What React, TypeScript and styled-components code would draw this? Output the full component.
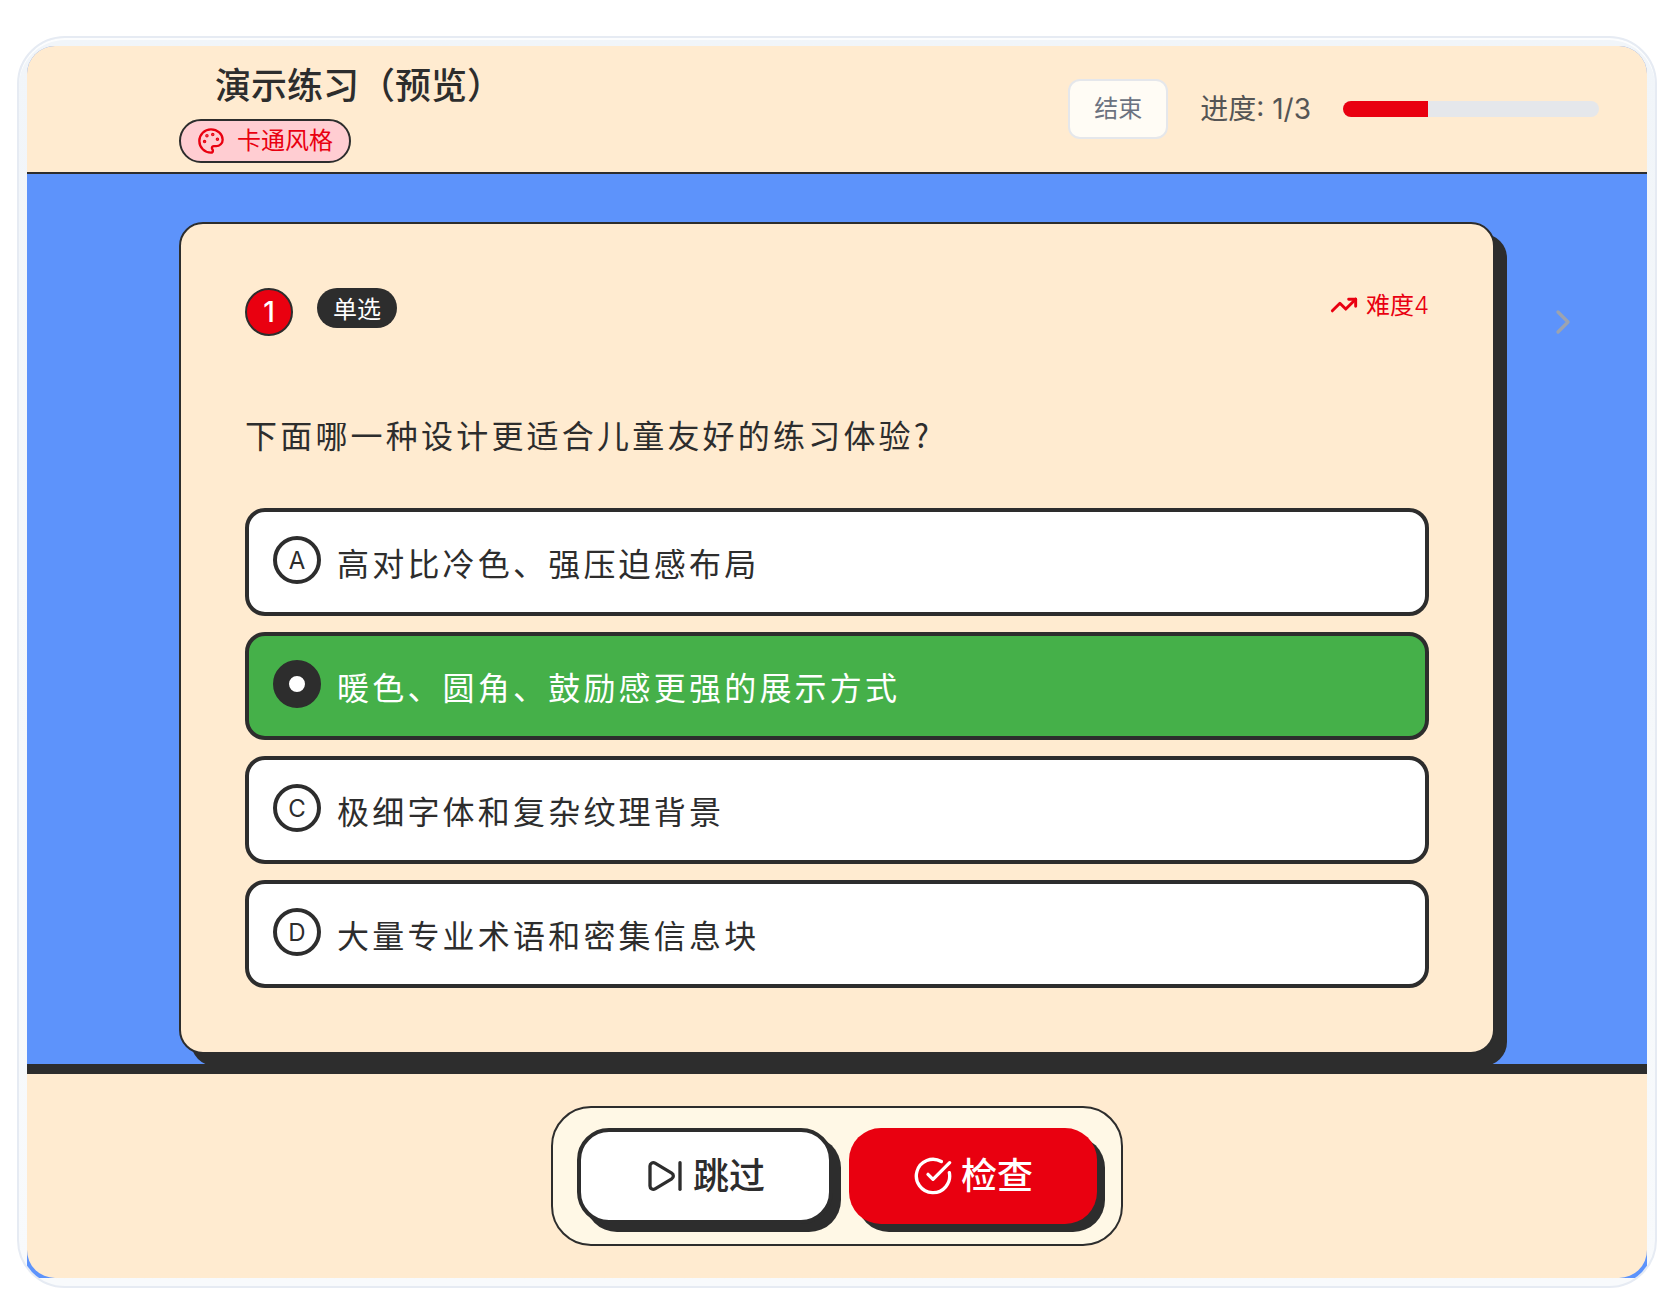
import React, { useState } from "react";
import styled, { createGlobalStyle } from "styled-components";
import { ChevronRight, CircleCheckBig, TrendingUp } from "lucide-react";

const ink = "#2d2d2d";
const cream = "#ffebd0";
const red = "#e90010";
const textFont = '"Noto Sans CJK SC", sans-serif';
const uiFont = 'Inter, "Noto Sans CJK SC", sans-serif';

const GlobalStyle = createGlobalStyle`
  *, *::before, *::after { box-sizing: border-box; }
  body {
    margin: 0;
    background: #ffffff;
    color: ${ink};
    font-family: ${textFont};
  }
  button { font-family: ${uiFont}; cursor: pointer; }
  h1 { margin: 0; }
`;

const Page = styled.div`
  padding: 36px 11px 24px 17px;
`;

const Frame = styled.div`
  overflow: hidden;
  padding: 8px;
  border: 2px solid #e6ebf3;
  border-radius: 48px;
  background: linear-gradient(180deg, #f1f5f9 0%, #f8fafc 100%);
  box-shadow: inset 0 2px 0 rgba(255, 255, 255, 0.8);
`;

const Screen = styled.div`
  overflow: hidden;
  border-radius: 28px 28px 0 0;
  background: #5d93fb;
`;

const Header = styled.header`
  display: flex;
  align-items: center;
  justify-content: space-between;
  height: 128px;
  padding: 0 48px 0 152px;
  border-bottom: 2px solid ${ink};
  background: ${cream};
`;

const Heading = styled.div`
  display: flex;
  flex-direction: column;
  align-items: flex-start;
  gap: 8px;
`;

const Title = styled.h1`
  padding-left: 36px;
  font-size: 36px;
  font-weight: 500;
  line-height: 56px;
`;

const StyleBadge = styled.span`
  display: flex;
  align-items: center;
  gap: 12px;
  height: 44px;
  padding: 0 16px;
  border: 2px solid ${ink};
  border-radius: 22px;
  background: #ffcdd2;
  color: ${red};
  font-family: ${uiFont};
  font-size: 24px;
  line-height: 32px;
`;

const Status = styled.div`
  display: flex;
  align-items: center;
  gap: 32px;
`;

const EndButton = styled.button`
  height: 60px;
  padding: 0 24px;
  border: 2px solid #e5e7eb;
  border-radius: 12px;
  background: #fffcf5;
  color: #6b7280;
  font-size: 24px;
  line-height: 32px;
`;

const ProgressLabel = styled.span`
  color: #555555;
  font-family: ${uiFont};
  font-size: 28px;
  line-height: 40px;
`;

const ProgressTrack = styled.div`
  overflow: hidden;
  width: 256px;
  height: 16px;
  border-radius: 8px;
  background: #e5e7eb;
`;

const ProgressFill = styled.div`
  height: 100%;
  background: ${red};
`;

const Stage = styled.main`
  display: grid;
  grid-template-columns: 152px minmax(0, 1fr) 152px;
  overflow: hidden;
  padding: 48px 0 10px;
`;

const Card = styled.section`
  grid-column: 2;
  padding: 64px;
  border: 2px solid ${ink};
  border-radius: 24px;
  background: ${cream};
  box-shadow: 12px 12px 0 ${ink};
`;

const CardTop = styled.div`
  display: flex;
  align-items: flex-start;
  gap: 24px;
  margin-bottom: 72px;
`;

const Num = styled.span`
  display: grid;
  place-items: center;
  width: 48px;
  height: 48px;
  border: 2px solid ${ink};
  border-radius: 50%;
  background: ${red};
  color: #ffffff;
  font-family: ${uiFont};
  font-size: 28px;
  font-weight: 500;
`;

const TypeTag = styled.span`
  padding: 0 16px;
  border-radius: 20px;
  background: ${ink};
  color: #ffffff;
  font-size: 24px;
  line-height: 40px;
`;

const Difficulty = styled.span`
  display: flex;
  align-items: center;
  gap: 8px;
  margin-left: auto;
  color: ${red};
  font-size: 24px;
  line-height: 32px;
`;

const Level = styled.span`
  font-family: ${uiFont};
  font-weight: 300;
`;

const Options = styled.fieldset`
  display: grid;
  gap: 16px;
  margin: 0;
  padding: 0;
  border: 0;
`;

const Question = styled.legend`
  margin-bottom: 48px;
  padding: 0;
  font-size: 32px;
  line-height: 52px;
  letter-spacing: 0.1em;
`;

const Option = styled.label<{ $on: boolean }>`
  display: flex;
  align-items: flex-start;
  gap: 16px;
  padding: 24px;
  border: 4px solid ${ink};
  border-radius: 20px;
  background: ${(p) => (p.$on ? "#45b049" : "#ffffff")};
  color: ${(p) => (p.$on ? "#ffffff" : ink)};
  cursor: pointer;
`;

const Marker = styled.span`
  display: grid;
  place-items: center;
  width: 48px;
  height: 48px;
  font-family: ${uiFont};
  font-size: 24px;

  & > * { grid-area: 1 / 1; }
`;

const Radio = styled.input`
  appearance: none;
  width: 48px;
  height: 48px;
  margin: 0;
  border: 4px solid ${ink};
  border-radius: 50%;
  cursor: pointer;

  &:checked {
    border-width: 16px;
    background: #ffffff;
  }
`;

const OptionText = styled.span`
  font-size: 32px;
  line-height: 52px;
  letter-spacing: 0.1em;
`;

const NextButton = styled.button`
  display: flex;
  justify-self: end;
  align-self: start;
  margin: 80px 64px 0 0;
  padding: 0;
  border: 0;
  background: none;
  color: #9ca3af;
`;

const Footer = styled.footer`
  display: flex;
  justify-content: center;
  padding: 32px;
  border-top: 10px solid ${ink};
  border-radius: 0 0 28px 28px;
  background: ${cream};
`;

const Actions = styled.div`
  display: flex;
  gap: 16px;
  padding: 20px 24px;
  border: 2px solid ${ink};
  border-radius: 40px;
  background: #fff8e6;
`;

const ActionButton = styled.button<{ $primary?: boolean }>`
  display: flex;
  align-items: center;
  gap: 8px;
  height: 96px;
  padding: 0 64px;
  border: ${(p) => (p.$primary ? "0" : `4px solid ${ink}`)};
  border-radius: 32px;
  background: ${(p) => (p.$primary ? red : "#ffffff")};
  color: ${(p) => (p.$primary ? "#ffffff" : ink)};
  box-shadow: 8px 8px 0 ${ink};
  font-size: 36px;
  font-weight: 500;
  line-height: 56px;
`;

const PaletteIcon = () => (
  <svg width="28" height="28" viewBox="0 0 24 24" fill="none" stroke="currentColor" strokeWidth="2" strokeLinecap="round" strokeLinejoin="round" aria-hidden="true">
    <circle cx="13.5" cy="6.5" r=".5" fill="currentColor" />
    <circle cx="17.5" cy="10.5" r=".5" fill="currentColor" />
    <circle cx="8.5" cy="7.5" r=".5" fill="currentColor" />
    <circle cx="6.5" cy="12.5" r=".5" fill="currentColor" />
    <path d="M12 2C6.5 2 2 6.5 2 12s4.5 10 10 10c.926 0 1.648-.746 1.648-1.688 0-.437-.18-.835-.437-1.125-.29-.289-.438-.652-.438-1.125a1.64 1.64 0 0 1 1.668-1.668h1.996c3.051 0 5.555-2.503 5.555-5.554C21.965 6.012 17.461 2 12 2z" />
  </svg>
);

const SkipIcon = () => (
  <svg width="40" height="40" viewBox="0 0 24 24" fill="none" stroke="currentColor" strokeWidth="2" strokeLinecap="round" strokeLinejoin="round" aria-hidden="true">
    <path d="M21 4v16" />
    <path d="M6.029 4.285A2 2 0 0 0 3 6v12a2 2 0 0 0 3.029 1.715l9.997-5.998a2 2 0 0 0 .003-3.432z" />
  </svg>
);

const choices = [
  { key: "A", text: "高对比冷色、强压迫感布局" },
  { key: "B", text: "暖色、圆角、鼓励感更强的展示方式" },
  { key: "C", text: "极细字体和复杂纹理背景" },
  { key: "D", text: "大量专业术语和密集信息块" },
];

export default function App() {
  const [picked, setPicked] = useState("B");
  const current = 1;
  const total = 3;

  return (
    <>
      <GlobalStyle />
      <Page lang="zh-CN">
        <Frame>
          <Screen>
            <Header>
              <Heading>
                <Title>演示练习（预览）</Title>
                <StyleBadge>
                  <PaletteIcon />
                  卡通风格
                </StyleBadge>
              </Heading>
              <Status>
                <EndButton type="button">结束</EndButton>
                <ProgressLabel id="progress-label">
                  进度: {current}/{total}
                </ProgressLabel>
                <ProgressTrack
                  role="progressbar"
                  aria-labelledby="progress-label"
                  aria-valuemin={0}
                  aria-valuemax={total}
                  aria-valuenow={current}
                >
                  <ProgressFill style={{ width: `${(current / total) * 100}%` }} />
                </ProgressTrack>
              </Status>
            </Header>

            <Stage>
              <Card>
                <CardTop>
                  <Num>{current}</Num>
                  <TypeTag>单选</TypeTag>
                  <Difficulty>
                    <TrendingUp size={28} strokeWidth={2.5} aria-hidden="true" />
                    <span>
                      难度<Level>4</Level>
                    </span>
                  </Difficulty>
                </CardTop>
                <Options>
                  <Question>下面哪一种设计更适合儿童友好的练习体验?</Question>
                  {choices.map(({ key, text }) => (
                    <Option key={key} $on={picked === key}>
                      <Marker>
                        <Radio
                          type="radio"
                          name="answer"
                          value={key}
                          checked={picked === key}
                          onChange={() => setPicked(key)}
                        />
                        {picked !== key && <span>{key}</span>}
                      </Marker>
                      <OptionText>{text}</OptionText>
                    </Option>
                  ))}
                </Options>
              </Card>
              <NextButton type="button" aria-label="下一题">
                <ChevronRight size={40} />
              </NextButton>
            </Stage>

            <Footer>
              <Actions>
                <ActionButton type="button">
                  <SkipIcon />
                  跳过
                </ActionButton>
                <ActionButton type="button" $primary>
                  <CircleCheckBig size={40} aria-hidden="true" />
                  检查
                </ActionButton>
              </Actions>
            </Footer>
          </Screen>
        </Frame>
      </Page>
    </>
  );
}
